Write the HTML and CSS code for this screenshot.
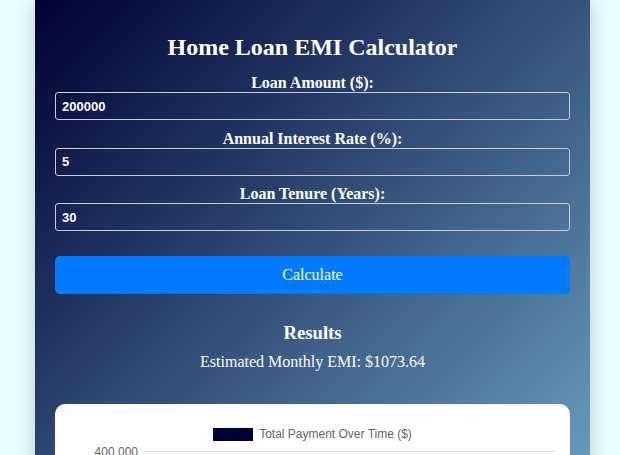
FILE: index.html
```html
<!DOCTYPE html>
<html>
<head>
<meta charset="utf-8">
<link rel="stylesheet" href="styles.css">
</head>
<body>
<div class="container">
  <h2 class="title">Home Loan EMI Calculator</h2>
  <label class="label" for="amount">Loan Amount ($):</label>
  <input class="field" id="amount" type="text" value="200000">
  <label class="label" for="rate">Annual Interest Rate (%):</label>
  <input class="field" id="rate" type="text" value="5">
  <label class="label" for="tenure">Loan Tenure (Years):</label>
  <input class="field" id="tenure" type="text" value="30">
  <button class="calc">Calculate</button>
  <h3 class="results">Results</h3>
  <p class="emi">Estimated Monthly EMI: $1073.64</p>
  <div class="card">
    <div class="legend"><span class="swatch"></span><span class="legend-text">Total Payment Over Time ($)</span></div>
    <div class="chart">
      <div class="row"><span class="ylabel">400,000</span><span class="grid"></span></div>
      <div class="row"><span class="ylabel">300,000</span><span class="grid"></span></div>
      <div class="row"><span class="ylabel">200,000</span><span class="grid"></span></div>
      <div class="row"><span class="ylabel">100,000</span><span class="grid"></span></div>
      <div class="row"><span class="ylabel">0</span><span class="grid"></span></div>
    </div>
  </div>
</div>
</body>
</html>
```
FILE: styles.css
```css
html, body {
  margin: 0;
  padding: 0;
}
body {
  background: #e9fefe;
  font-family: "Liberation Serif", "Times New Roman", serif;
  color: #fff;
}
.container {
  box-sizing: border-box;
  width: 555px;
  margin-left: 35px;
  height: 800px;
  padding: 33px 20px 0;
  background: linear-gradient(135deg, #000033, #87ceeb);
  box-shadow: 0 0 20px rgba(0, 0, 0, 0.2);
  display: flex;
  flex-direction: column;
}
.title {
  margin: 0 0 13px;
  font-size: 24px;
  line-height: 28px;
  text-align: center;
  font-weight: bold;
}
.label {
  display: block;
  font-size: 16px;
  line-height: 18px;
  font-weight: bold;
  text-align: center;
}
.field {
  box-sizing: border-box;
  height: 28px;
  width: 100%;
  margin: 0 0 9.5px;
  padding: 0 6px;
  background: transparent;
  border: 1px solid #c9ccd6;
  border-radius: 3px;
  color: #fff;
  font-family: "Liberation Sans", Arial, sans-serif;
  font-weight: bold;
  font-size: 13px;
  outline: none;
}
.calc {
  margin-top: 15px;
  height: 38px;
  border: none;
  border-radius: 5px;
  background: #007bff;
  color: #fff;
  font-family: "Liberation Serif", "Times New Roman", serif;
  font-size: 16px;
}
.results {
  margin: 28px 0 8px;
  font-size: 18.72px;
  line-height: 22px;
  text-align: center;
}
.emi {
  margin: 0 0 32px;
  font-size: 16px;
  line-height: 20px;
  text-align: center;
}
.card {
  background: #fff;
  border-radius: 10px;
  padding: 24px 10px 20px;
  height: 300px;
}
.legend {
  display: flex;
  justify-content: center;
  align-items: center;
  gap: 6px;
  height: 13px;
}
.swatch {
  width: 40px;
  height: 13px;
  background: #000033;
}
.legend-text {
  font-family: "Liberation Sans", Arial, sans-serif;
  font-size: 12px;
  color: #666;
}
.chart {
  margin-top: 5px;
  display: flex;
  flex-direction: column;
  gap: 50px;
}
.row {
  display: flex;
  align-items: center;
  height: 12px;
}
.ylabel {
  width: 73px;
  text-align: right;
  font-family: "Liberation Sans", Arial, sans-serif;
  font-size: 12px;
  color: #666;
}
.grid {
  flex: 1;
  height: 1px;
  margin-left: 4px;
  margin-right: 5px;
  background: #e5e5e5;
}
```
